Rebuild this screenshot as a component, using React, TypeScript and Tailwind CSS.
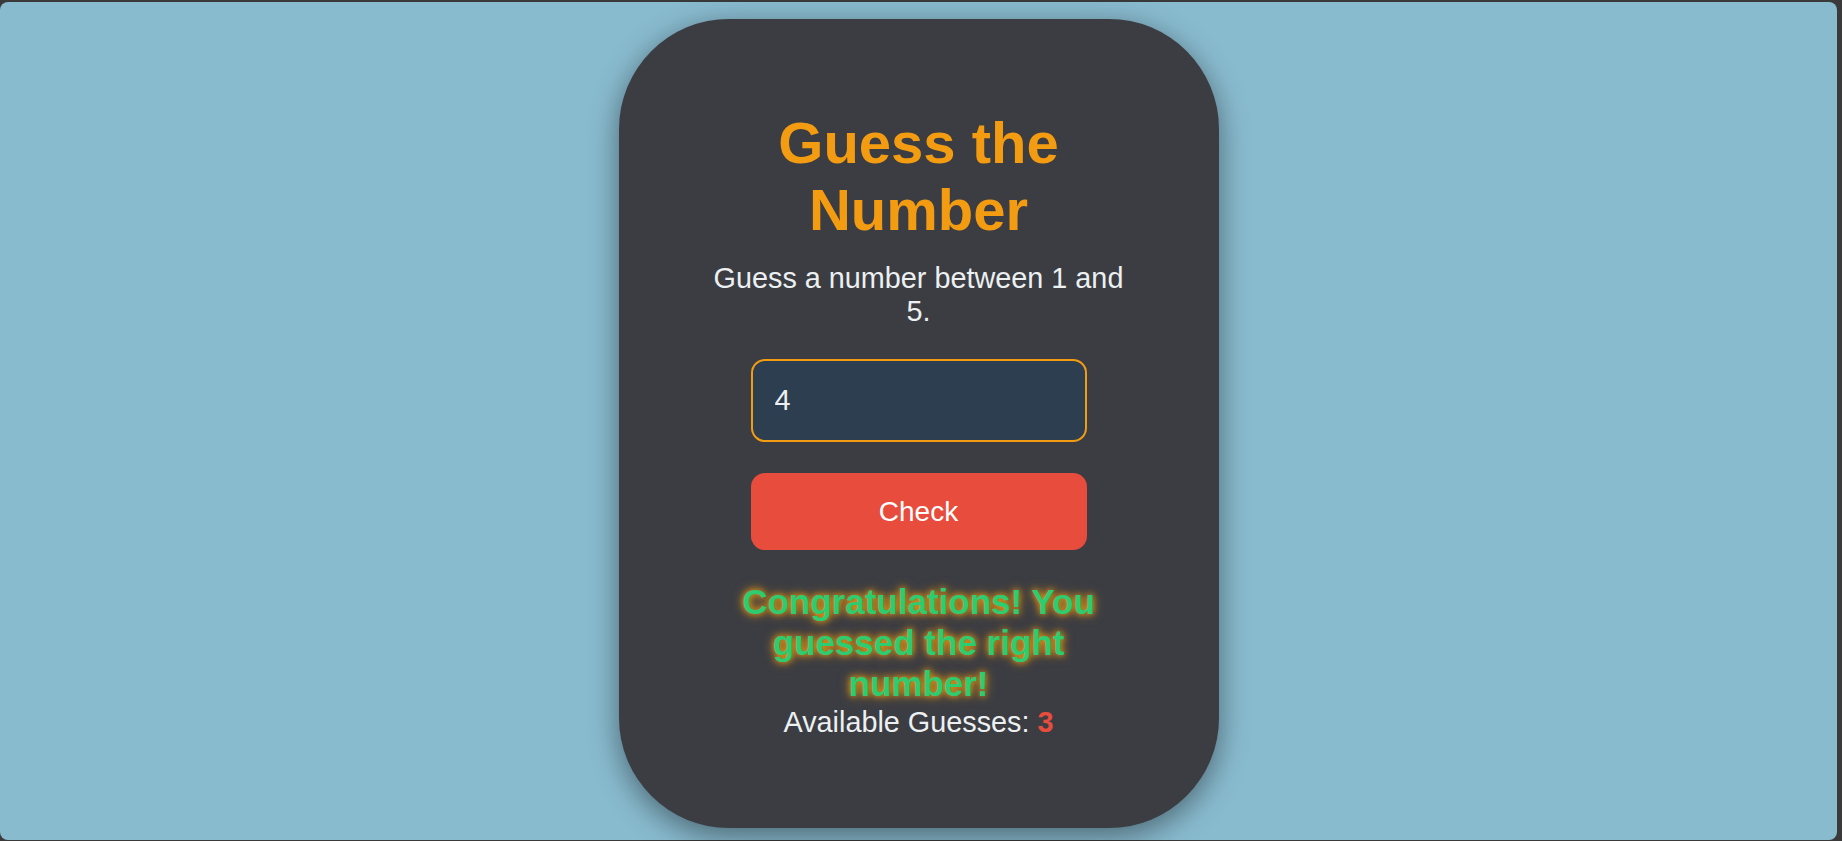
import { useState } from 'react';

export default function App() {
  const [guess, setGuess] = useState('4');

  return (
    <div className="h-screen w-full bg-[#3a3a3a] pt-[2px] pr-[5px] pb-[1px] font-['Liberation_Sans',Arial,sans-serif]">
      <div className="h-full w-full rounded-lg bg-[#89bbcf] pt-[17px] flex justify-center items-start">
        <div className="w-[600px] rounded-[110px] bg-[#3b3d43] px-[90px] pt-[91px] pb-[89px] flex flex-col items-center text-center shadow-[0_8px_30px_rgba(0,0,0,0.45)]">
          <h1 className="text-[58px] leading-[1.149] font-bold text-[#f39c12]">Guess the Number</h1>
          <p className="mt-[19px] text-[28.8px] leading-[1.149] text-[#ecf0f1]">Guess a number between 1 and 5.</p>

          <input
            type="number"
            value={guess}
            onChange={(e) => setGuess(e.target.value)}
            className="mt-[31px] w-[336px] h-[83px] rounded-[14px] border-[2.5px] border-[#f39c12] bg-[#2c3e50] px-[22px] text-[28.8px] text-[#ecf0f1] outline-none [appearance:textfield] [&::-webkit-inner-spin-button]:appearance-none"
          />

          <button className="mt-[31px] w-[336px] h-[77px] rounded-[14px] bg-[#e74c3c] text-[28px] text-white">
            Check
          </button>

          <p className="mt-[32px] text-[35px] leading-[1.17] font-bold text-[#2ecc71] [text-shadow:0_0_6px_#f39c12,0_0_12px_rgba(243,156,18,0.8)]">
            Congratulations! You guessed the right number!
          </p>
          <p className="mt-[1px] text-[28.8px] leading-[1.149] text-[#ecf0f1]">
            Available Guesses: <span className="font-bold text-[#e74c3c]">3</span>
          </p>
        </div>
      </div>
    </div>
  );
}
